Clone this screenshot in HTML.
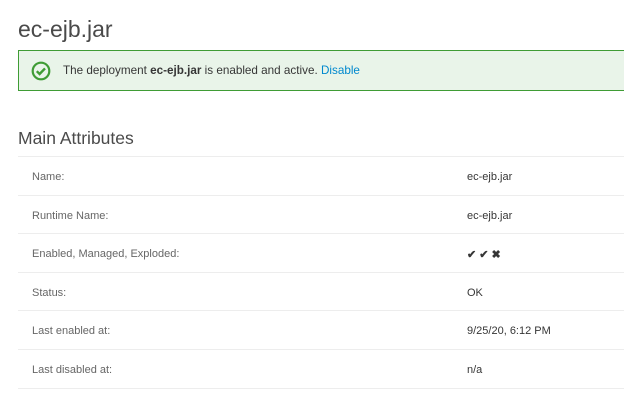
<!DOCTYPE html>
<html><head><style>
body{margin:0;background:#fff;font-family:"Liberation Sans",sans-serif;color:#363636;width:624px;height:406px;overflow:hidden;position:relative}
h1{position:absolute;left:18px;top:16px;margin:0;font-weight:normal;font-size:23px;color:#4a4a4a}
.alert{position:absolute;left:18px;top:50px;width:620px;height:41px;box-sizing:border-box;background:#e9f4e9;border:1px solid #3f9c35;font-size:11.7px;color:#363636}
.alert span.t{position:absolute;left:44px;top:13px}
.alert svg{position:absolute;left:12px;top:10px}
a{color:#0088ce;text-decoration:none}
h2{position:absolute;left:18px;top:128px;margin:0;font-weight:normal;font-size:17.5px;color:#4a4a4a}
.row{position:absolute;left:18px;width:606px;height:38px;border-top:1px solid #ededed;font-size:11px}
.row .l{position:absolute;left:14px;top:14px;color:#666}
.row .v{position:absolute;left:449px;top:14px;color:#363636}
</style></head><body>
<h1>ec-ejb.jar</h1>
<div class="alert"><svg width="20" height="20" viewBox="0 0 20 20"><circle cx="10" cy="10" r="8.3" fill="none" stroke="#3f9c35" stroke-width="2.2"/><path d="M5.8 10.2l2.8 2.8 5.4-5.6" fill="none" stroke="#3f9c35" stroke-width="2.4"/></svg><span class="t">The deployment <b>ec-ejb.jar</b> is enabled and active. <a>Disable</a></span></div>
<h2>Main Attributes</h2>
<div class="row" style="top:156px"><span class="l">Name:</span><span class="v">ec-ejb.jar</span></div>
<div class="row" style="top:195px"><span class="l">Runtime Name:</span><span class="v">ec-ejb.jar</span></div>
<div class="row" style="top:233px"><span class="l">Enabled, Managed, Exploded:</span><span class="v" style="font-weight:bold">✔ ✔ ✖</span></div>
<div class="row" style="top:272px"><span class="l">Status:</span><span class="v">OK</span></div>
<div class="row" style="top:310px"><span class="l">Last enabled at:</span><span class="v">9/25/20, 6:12 PM</span></div>
<div class="row" style="top:349px;border-bottom:1px solid #ededed"><span class="l">Last disabled at:</span><span class="v">n/a</span></div>
</body></html>
